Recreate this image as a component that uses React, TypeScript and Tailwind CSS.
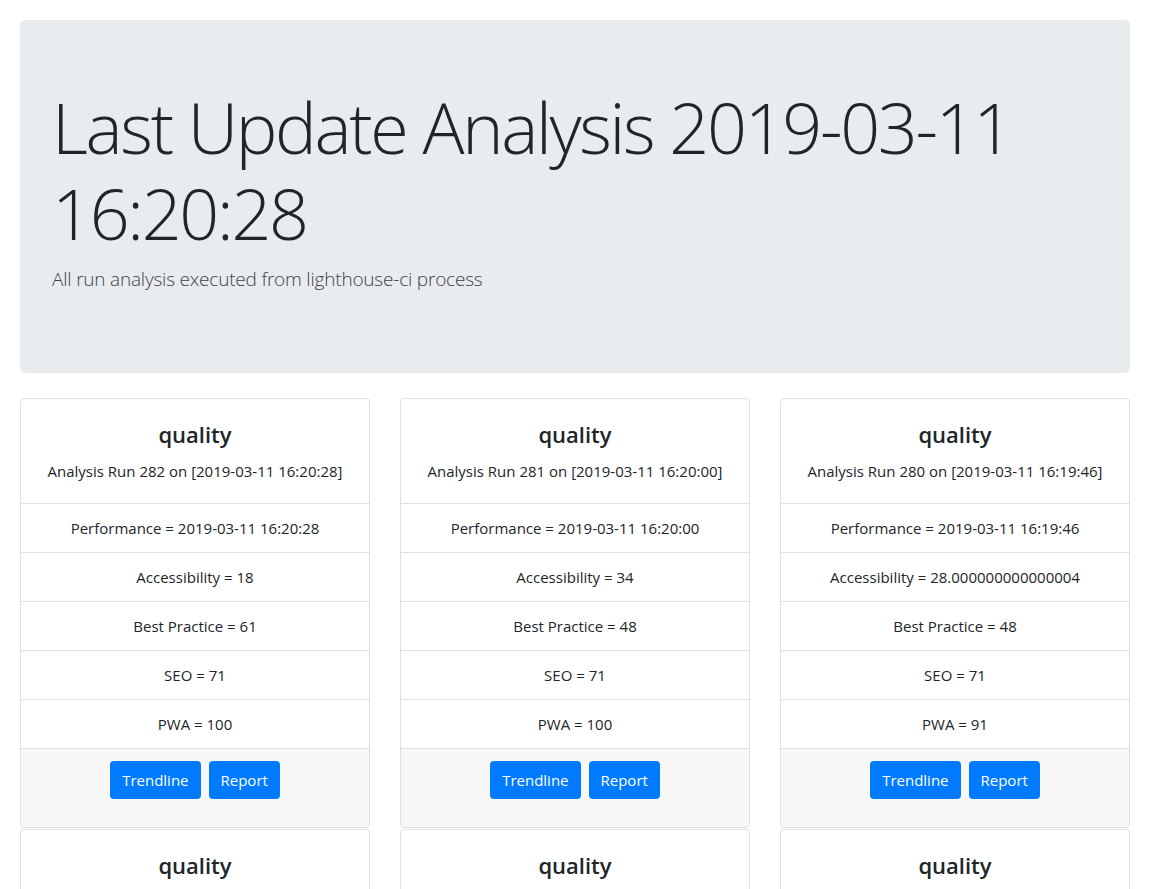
import React from 'react';

interface Run {
  id: number;
  date: string;
  accessibility: string;
  bestPractice: string;
  seo: string;
  pwa: string;
}

const runs: Run[] = [
  { id: 282, date: '2019-03-11 16:20:28', accessibility: '18', bestPractice: '61', seo: '71', pwa: '100' },
  { id: 281, date: '2019-03-11 16:20:00', accessibility: '34', bestPractice: '48', seo: '71', pwa: '100' },
  { id: 280, date: '2019-03-11 16:19:46', accessibility: '28.000000000000004', bestPractice: '48', seo: '71', pwa: '91' },
  { id: 279, date: '2019-03-11 16:19:12', accessibility: '18', bestPractice: '61', seo: '71', pwa: '100' },
  { id: 278, date: '2019-03-11 16:18:40', accessibility: '34', bestPractice: '48', seo: '71', pwa: '100' },
  { id: 277, date: '2019-03-11 16:18:05', accessibility: '18', bestPractice: '61', seo: '71', pwa: '91' },
];

function RunCard({ run }: { run: Run }) {
  const rows = [
    `Performance = ${run.date}`,
    `Accessibility = ${run.accessibility}`,
    `Best Practice = ${run.bestPractice}`,
    `SEO = ${run.seo}`,
    `PWA = ${run.pwa}`,
  ];
  return (
    <div className="flex flex-col overflow-hidden rounded-[4px] border border-[#dfdfdf] bg-white text-center">
      <div className="px-5 pt-[21px] pb-5">
        <h3 className="text-[22px] leading-[29px] font-semibold">quality</h3>
        <p className="mt-[10px] text-[15px] leading-6">
          Analysis Run {run.id} on [{run.date}]
        </p>
      </div>
      <ul>
        {rows.map((row) => (
          <li key={row} className="border-t border-[#dfdfdf] px-5 py-3 text-[15px] leading-6">
            {row}
          </li>
        ))}
      </ul>
      <div className="flex justify-center gap-2 border-t border-[#dfdfdf] bg-[#f7f7f7] px-5 pt-3 pb-[28px]">
        <button type="button" className="h-[38px] rounded-[4px] bg-[#007bff] px-3 text-[15px] text-white">
          Trendline
        </button>
        <button type="button" className="h-[38px] rounded-[4px] bg-[#007bff] px-3 text-[15px] text-white">
          Report
        </button>
      </div>
    </div>
  );
}

export default function App() {
  return (
    <div className="min-h-screen bg-white p-5 text-[#212529] [font-family:'Open_Sans',sans-serif]">
      <div className="w-[1110px]">
        <div className="rounded-[5px] bg-[#e9ecef] px-8 pt-16 pb-[79px]">
          <h1 className="text-[70px] leading-[86px] font-light tracking-[-2.3px]">
            Last Update Analysis 2019-03-11 16:20:28
          </h1>
          <p className="mt-2 text-[19px] leading-[30px] font-light tracking-[-0.2px] text-[#3d4348]">
            All run analysis executed from lighthouse-ci process
          </p>
        </div>
        <div className="mt-[25px] grid grid-cols-3 gap-x-[30px] gap-y-[1px]">
          {runs.map((run) => (
            <RunCard key={run.id} run={run} />
          ))}
        </div>
      </div>
    </div>
  );
}
